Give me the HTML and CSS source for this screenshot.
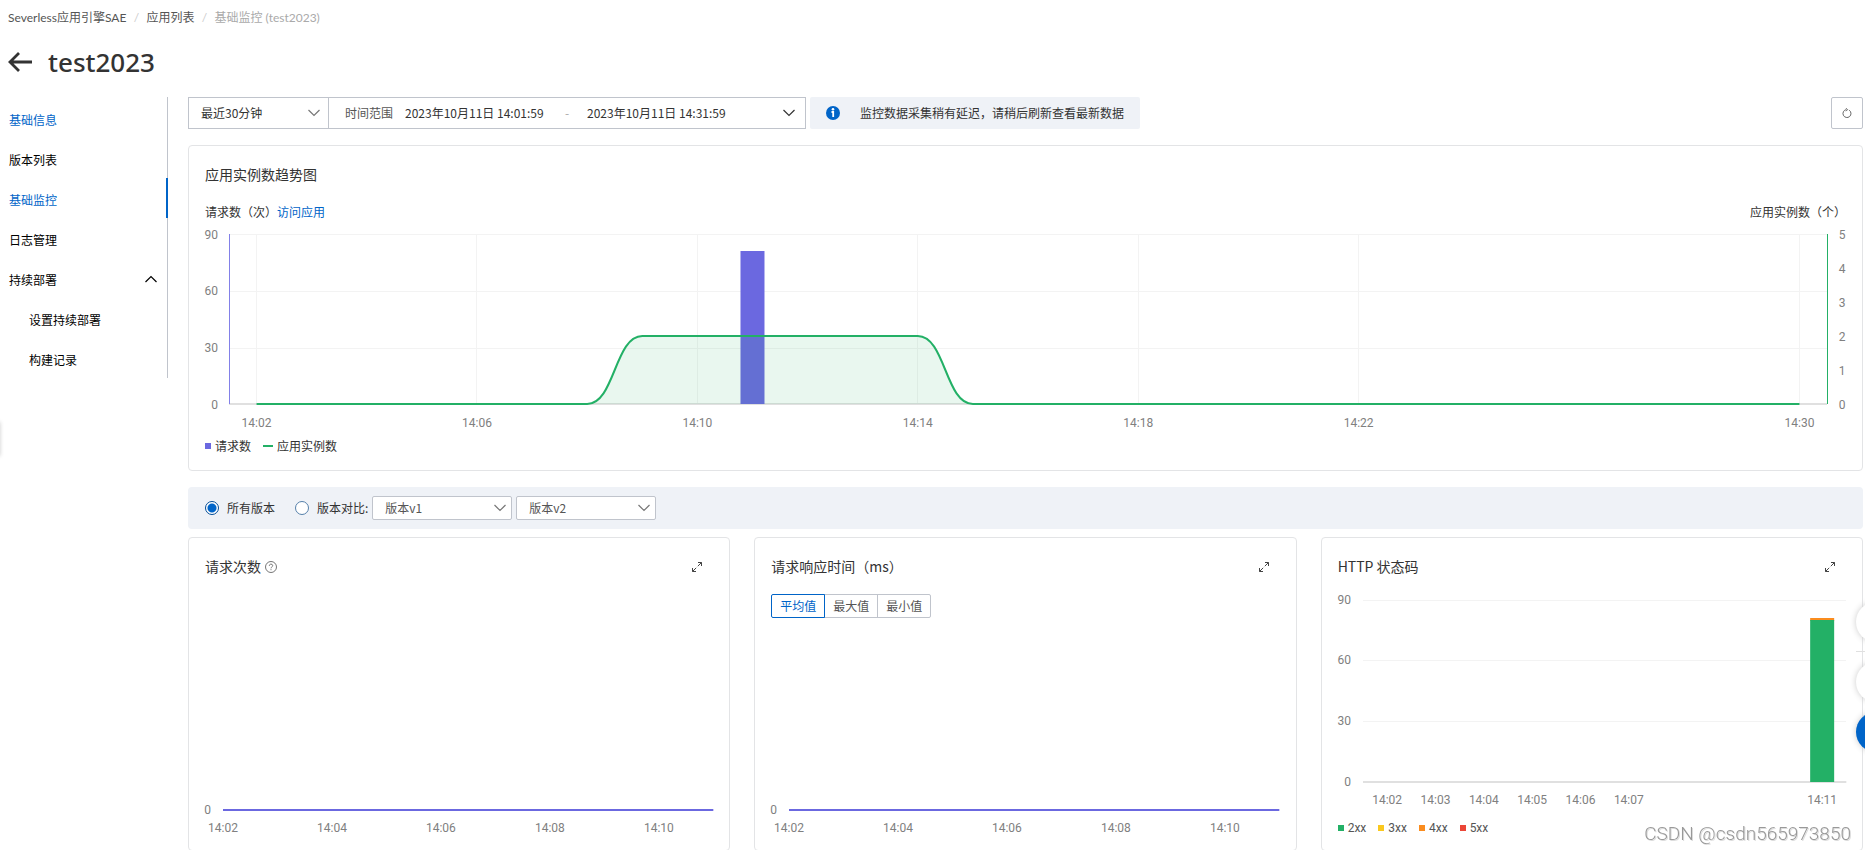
FILE: index.html
```html
<!DOCTYPE html>
<html lang="zh-CN">
<head>
<meta charset="utf-8">
<title>基础监控 (test2023)</title>
<link rel="stylesheet" href="styles.css">
</head>
<body>
<svg class="sprite" aria-hidden="true">
  <symbol id="chevron" viewBox="0 0 12 12"><path d="M0.5 3L6 8.5L11.5 3" fill="none" stroke="currentColor" stroke-width="1.2"/></symbol>
  <symbol id="expand" viewBox="0 0 10 10"><path d="M6 .5H9.500V4M9.500 .5L5.800 4.200M.5 6V9.500H4M.5 9.500L4.200 5.800" fill="none" stroke="currentColor"/></symbol>
</svg>
<nav class="breadcrumb" aria-label="breadcrumb">
  <a href="#">Severless应用引擎SAE</a><span class="sep">/</span><a href="#">应用列表</a><span class="sep">/</span><span class="current">基础监控 (test2023)</span>
</nav>
<header class="page-head">
  <button class="back" aria-label="返回"><svg width="24" height="20" viewBox="0 0 24 20"><path d="M11 1L2 10L11 19M2 10H24" fill="none" stroke="currentColor" stroke-width="2.800"/></svg></button>
  <h1>test2023</h1>
</header>
<div class="layout">
  <nav class="side">
    <a class="blue" href="#">基础信息</a>
    <a href="#">版本列表</a>
    <a class="blue active" href="#">基础监控</a>
    <a href="#">日志管理</a>
    <a class="group" href="#">持续部署<svg class="up" width="12" height="12"><use href="#chevron"/></svg></a>
    <a class="sub" href="#">设置持续部署</a>
    <a class="sub" href="#">构建记录</a>
  </nav>
  <main>
    <div class="toolbar">
      <div class="select period"><select aria-label="时间"><option>最近30分钟</option></select><svg width="12" height="12"><use href="#chevron"/></svg></div>
      <div class="range">
        <label for="from">时间范围</label>
        <input id="from" value="2023年10月11日 14:01:59">
        <span class="dash">-</span>
        <input aria-label="结束时间" value="2023年10月11日 14:31:59">
        <svg width="12" height="12"><use href="#chevron"/></svg>
      </div>
      <div class="notice">
        <svg width="14" height="14" viewBox="0 0 14 14"><circle cx="7" cy="7" r="7" fill="#0064c8"/><circle cx="7" cy="3.300" r="1.300" fill="#fff"/><path d="M5.500 6H7.200V11" fill="none" stroke="#fff" stroke-width="1.800"/></svg>
        <span>监控数据采集稍有延迟，请稍后刷新查看最新数据</span>
      </div>
      <button class="refresh" aria-label="刷新"><svg width="10" height="10" viewBox="0 0 10 10"><path d="M7.200 2.200A4 4 0 1 1 4.200 1.600M3.800 .2L5.600 1.600L4 3.200" fill="none" stroke="currentColor" stroke-width=".9"/></svg></button>
    </div>

    <section class="card trend">
      <h2>应用实例数趋势图</h2>
      <div class="axis-titles"><span>请求数（次）<a href="#">访问应用</a></span><span>应用实例数（个）</span></div>
      <svg class="plot" role="img" aria-label="应用实例数趋势图">
        <g class="grid">
          <line x1="0" x2="100%" y1="0" y2="0"/><line x1="0" x2="100%" y1="57" y2="57"/><line x1="0" x2="100%" y1="114" y2="114"/>
          <line x1="1.724%" x2="1.724%" y1="0" y2="170"/><line x1="15.517%" x2="15.517%" y1="0" y2="170"/><line x1="29.310%" x2="29.310%" y1="0" y2="170"/><line x1="43.103%" x2="43.103%" y1="0" y2="170"/><line x1="56.897%" x2="56.897%" y1="0" y2="170"/><line x1="70.690%" x2="70.690%" y1="0" y2="170"/><line x1="98.276%" x2="98.276%" y1="0" y2="170"/>
        </g>
        <line class="base" x1="0" x2="100%" y1="170" y2="170"/>
        <svg class="anchor" x="32.759%"><rect x="-12" y="17" width="24" height="153" fill="#6b68e0"/></svg>
        <svg width="100%" height="171" viewBox="0 0 29 171" preserveAspectRatio="none" class="anchor">
          <path d="M6.500 170C7 170 7 102 7.500 102H12.500C13 102 13 170 13.500 170Z" fill="#23b066" fill-opacity=".1"/>
          <path class="series" stroke="#23b066" d="M.5 170H6.500C7 170 7 102 7.500 102H12.500C13 102 13 170 13.500 170H28.500"/>
        </svg>
        <line class="edge" stroke="#8280e8" x1="0" x2="0" y1="0" y2="170"/>
        <line class="edge" stroke="#23b066" x1="100%" x2="100%" y1="0" y2="170"/>
        <g class="end"><text x="-11" y="5">90</text><text x="-11" y="61">60</text><text x="-11" y="118">30</text><text x="-11" y="175">0</text></g>
        <g class="mid">
          <text x="100%" dx="15" y="5">5</text><text x="100%" dx="15" y="39">4</text><text x="100%" dx="15" y="73">3</text><text x="100%" dx="15" y="107">2</text><text x="100%" dx="15" y="141">1</text><text x="100%" dx="15" y="175">0</text>
          <text x="1.724%" y="193">14:02</text><text x="15.517%" y="193">14:06</text><text x="29.310%" y="193">14:10</text><text x="43.103%" y="193">14:14</text><text x="56.897%" y="193">14:18</text><text x="70.690%" y="193">14:22</text><text x="98.276%" y="193">14:30</text>
        </g>
      </svg>
      <div class="legend"><span><i class="sq violet"></i>请求数</span><span><i class="dashmark"></i>应用实例数</span></div>
    </section>

    <div class="versions">
      <label><input type="radio" name="v" checked>所有版本</label>
      <label><input type="radio" name="v">版本对比:</label>
      <div class="select small"><select aria-label="版本一"><option>版本v1</option></select><svg width="12" height="12"><use href="#chevron"/></svg></div>
      <div class="select small"><select aria-label="版本二"><option>版本v2</option></select><svg width="12" height="12"><use href="#chevron"/></svg></div>
    </div>

    <div class="cards">
      <section class="card">
        <div class="card-head"><h2>请求次数</h2><svg class="help" width="12" height="12" viewBox="0 0 12 12"><circle cx="6" cy="6" r="5.500" fill="none" stroke="currentColor" stroke-width=".9"/><path d="M4.300 4.800C4.300 2.500 7.700 2.600 7.700 4.700C7.700 5.900 6 5.900 6 7.300M6 8.200V9.200" fill="none" stroke="currentColor" stroke-width=".9"/></svg><button class="expand" aria-label="放大"><svg width="10" height="10"><use href="#expand"/></svg></button></div>
        <svg class="flat" role="img" aria-label="请求次数">
          <line class="series" stroke="#6b68e0" x1="0" x2="100%" y1="100" y2="100"/>
          <text class="end" x="-12" y="104">0</text>
          <g class="mid"><text x="0" y="122">14:02</text><text x="22.222%" y="122">14:04</text><text x="44.444%" y="122">14:06</text><text x="66.667%" y="122">14:08</text><text x="88.889%" y="122">14:10</text></g>
        </svg>
      </section>
      <section class="card">
        <div class="card-head"><h2>请求响应时间（ms）</h2><button class="expand" aria-label="放大"><svg width="10" height="10"><use href="#expand"/></svg></button></div>
        <div class="segments"><button class="on">平均值</button><button>最大值</button><button>最小值</button></div>
        <svg class="flat" role="img" aria-label="请求响应时间">
          <line class="series" stroke="#6b68e0" x1="0" x2="100%" y1="100" y2="100"/>
          <text class="end" x="-12" y="104">0</text>
          <g class="mid"><text x="0" y="122">14:02</text><text x="22.222%" y="122">14:04</text><text x="44.444%" y="122">14:06</text><text x="66.667%" y="122">14:08</text><text x="88.889%" y="122">14:10</text></g>
        </svg>
      </section>
      <section class="card">
        <div class="card-head"><h2>HTTP 状态码</h2><button class="expand" aria-label="放大"><svg width="10" height="10"><use href="#expand"/></svg></button></div>
        <svg class="status" role="img" aria-label="HTTP 状态码">
          <g class="grid"><line x1="0" x2="100%" y1="0" y2="0"/><line x1="0" x2="100%" y1="60" y2="60"/><line x1="0" x2="100%" y1="121" y2="121"/></g>
          <line class="base" x1="0" x2="100%" y1="182" y2="182"/>
          <svg class="anchor" x="95%"><rect x="-12" y="18" width="24" height="3" fill="#fa8c1e"/><rect x="-12" y="20" width="24" height="162" fill="#23b066"/></svg>
          <g class="end"><text x="-12" y="4">90</text><text x="-12" y="64">60</text><text x="-12" y="125">30</text><text x="-12" y="186">0</text></g>
          <g class="mid"><text x="5%" y="204">14:02</text><text x="15%" y="204">14:03</text><text x="25%" y="204">14:04</text><text x="35%" y="204">14:05</text><text x="45%" y="204">14:06</text><text x="55%" y="204">14:07</text><text x="95%" y="204">14:11</text></g>
        </svg>
        <div class="legend codes"><span><i class="sq green"></i>2xx</span><span><i class="sq yellow"></i>3xx</span><span><i class="sq orange"></i>4xx</span><span><i class="sq red"></i>5xx</span></div>
      </section>
    </div>
  </main>
</div>
<div class="drawer-handle"></div>
<div class="float first"></div>
<div class="float-line"></div>
<div class="float second"></div>
<div class="float help-ball"></div>
<div class="watermark">CSDN @csdn565973850</div>
</body>
</html>
```
FILE: styles.css
```css
* { box-sizing: border-box; }
body {
  margin: 0;
  padding: 8px 2px 0 8px;
  background: #fff;
  color: #333;
  font: 12px/20px "Noto Sans CJK SC", sans-serif;
}
a { color: inherit; text-decoration: none; }
button, input, select { font: inherit; color: inherit; }
button { background: none; border: 0; padding: 0; cursor: pointer; }
svg { display: block; flex: none; }
.sprite { position: absolute; width: 0; height: 0; }

.breadcrumb { display: flex; color: #555; font-family: Lato, "Noto Sans CJK SC", sans-serif; }
.breadcrumb .sep { width: 20px; text-align: center; color: #ccc; }
.breadcrumb .current { color: #aaa; }

.page-head { display: flex; align-items: center; gap: 16px; margin: 14px 0 15px; }
.page-head h1 { margin: 0; font: 500 26px/40px "Noto Sans", "Noto Sans CJK SC", sans-serif; }

.layout { display: flex; gap: 20px; }
.side { flex: none; align-self: flex-start; width: 160px; display: flex; flex-direction: column; padding-top: 1px; border-right: 1px solid #c0c4cc; color: #000; }
.side a { position: relative; height: 40px; padding: 2px 10px 0 1px; line-height: 40px; }
.side .blue { color: #0064c8; }
.side .active::after { content: ""; position: absolute; right: -1px; top: 0; width: 2px; height: 40px; background: #0064c8; }
.side .group { display: flex; justify-content: space-between; }
.side .up { margin-top: 13px; transform: rotate(180deg); }
.side .sub { padding-left: 21px; }
main { flex: 1; min-width: 0; }

.toolbar { display: flex; height: 32px; margin-bottom: 16px; }
.select { position: relative; display: flex; }
.select select { width: 100%; appearance: none; border: 1px solid #c0c4cc; border-radius: 0; background: #fff; padding: 0 24px 0 12px; }
.select svg { position: absolute; right: 9px; top: 50%; margin-top: -6px; color: #777; pointer-events: none; }
.period { width: 141px; }
.range { display: flex; align-items: center; width: 478px; margin-left: -1px; padding: 0 10px 0 16px; border: 1px solid #c0c4cc; }
.range label { margin-right: 12px; color: #555; }
.range input { width: 150px; padding: 0; border: 0; background: none; outline: 0; }
.range .dash { width: 32px; padding-left: 10px; color: #aaa; }
.range svg { margin-left: auto; }
.notice { display: flex; align-items: center; gap: 20px; margin-left: 4px; padding: 0 16px; border-radius: 2px; background: #eff2f7; }
.refresh { display: grid; place-items: center; width: 32px; margin-left: auto; border: 1px solid #c0c4cc; border-radius: 2px; color: #555; }

.card { display: flex; flex-direction: column; border: 1px solid #e3e4e6; border-radius: 4px; padding: 16px 16px 12px; min-width: 0; }
.card.trend { padding-bottom: 14px; }
.card h2 { margin: 0; font-size: 14px; font-weight: 400; line-height: 24px; }
.axis-titles { display: flex; justify-content: space-between; margin: 16px 0 12px; }
.axis-titles a { color: #0064c8; }
.plot { width: calc(100% - 43px); height: 170px; margin-left: 24px; overflow: visible; }
.anchor { overflow: visible; }
.card text { font: 12px Roboto, sans-serif; fill: #808080; }
.grid line { stroke: #f3f3f3; shape-rendering: crispEdges; }
.base { stroke: #e0e0e0; stroke-width: 2; }
.edge { shape-rendering: crispEdges; }
.series { fill: none; stroke-width: 2; vector-effect: non-scaling-stroke; }
.end { text-anchor: end; }
.mid { text-anchor: middle; }
.legend { display: flex; gap: 12px; margin-top: 32px; }
.legend span { display: flex; align-items: center; gap: 4px; }
.sq { width: 6px; height: 6px; }
.dashmark { width: 10px; height: 2px; background: #23b066; }
.violet { background: #6b68e0; }
.green { background: #23b066; }
.yellow { background: #fac81e; }
.orange { background: #fa8c1e; }
.red { background: #eb4637; }

.versions { display: flex; align-items: center; height: 42px; margin: 16px 0 8px; padding-left: 17px; border-radius: 4px; background: #eff2f7; }
.versions label { display: flex; align-items: center; gap: 8px; margin-right: 20px; }
.versions label + label { margin-right: 4px; }
.versions input { appearance: none; width: 14px; height: 14px; margin: 0; border: 1px solid #5580aa; border-radius: 50%; background: #fff; }
.versions input:checked { border-color: #004b96; background: radial-gradient(circle, #0064c8 4px, #fff 5px); }
.small { width: 140px; height: 24px; margin-right: 4px; color: #555; }
.select.small select { border-radius: 2px; }
.select.small svg { right: 6px; }

.cards { display: grid; grid-template-columns: repeat(3, minmax(0, 1fr)); gap: 24px; }
.card-head { display: flex; align-items: center; gap: 4px; }
.help { margin-top: 2px; color: #666; }
.expand { margin: 2px 11px 0 auto; color: #444; }
.flat { width: calc(100% - 18px); height: 128px; margin: auto 0 0 18px; overflow: visible; }
.segments { display: flex; margin-top: 16px; }
.segments button { width: 54px; height: 24px; margin-right: -1px; border: 1px solid #c0c4cc; color: #555; line-height: 20px; }
.segments button:last-child { border-radius: 0 2px 2px 0; }
.segments .on { position: relative; border-color: #0064c8; border-radius: 2px 0 0 2px; color: #0064c8; }
.status { width: calc(100% - 25px); height: 182px; margin: 22px 0 0 25px; overflow: visible; }
.codes { margin-top: 36px; font-family: Roboto, sans-serif; color: #555; }

.drawer-handle { position: fixed; left: -9px; top: 422px; width: 9px; height: 34px; background: #fff; box-shadow: 0 0 4px #ccc; }
.float { position: fixed; right: -31px; width: 40px; height: 40px; border-radius: 50%; background: #fff; box-shadow: 0 0 6px #ccc; }
.first { top: 602px; }
.second { top: 662px; }
.help-ball { top: 712px; background: #0064c8; }
.float-line { position: fixed; right: 0; top: 651px; width: 9px; height: 1px; background: #e0e0e0; }
.watermark { position: fixed; right: 14px; bottom: 4px; font: 300 19px/24px Roboto, sans-serif; color: #999; text-shadow: 1px 1px 0 #ddd; }
```
